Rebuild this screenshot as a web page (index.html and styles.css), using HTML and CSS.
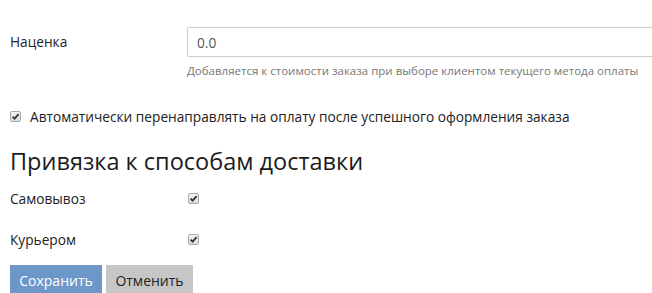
FILE: index.html
```html
<!DOCTYPE html>
<html lang="ru">
<head>
  <meta charset="UTF-8">
  <title>Способ оплаты</title>
  <link rel="stylesheet" href="styles.css">
</head>
<body>
  <form class="payment-form">
    <div class="form-row form-row-top">
      <label class="form-label" for="markup">Наценка</label>
      <div class="form-field">
        <input class="form-input" type="text" id="markup" value="0.0">
        <div class="form-help">Добавляется к стоимости заказа при выборе клиентом текущего метода оплаты</div>
      </div>
    </div>

    <div class="check-line">
      <span class="check-box">
        <svg viewBox="0 0 11 11" width="11" height="11"><path d="M2.6 5.6 L4.6 7.6 L8.6 3.2" fill="none" stroke="#333" stroke-width="1.8"/></svg>
      </span>
      <span>Автоматически перенаправлять на оплату после успешного оформления заказа</span>
    </div>

    <h2 class="section-title">Привязка к способам доставки</h2>

    <div class="form-row delivery-row">
      <span class="form-label">Самовывоз</span>
      <span class="check-box">
        <svg viewBox="0 0 11 11" width="11" height="11"><path d="M2.6 5.6 L4.6 7.6 L8.6 3.2" fill="none" stroke="#333" stroke-width="1.8"/></svg>
      </span>
    </div>
    <div class="form-row delivery-row">
      <span class="form-label">Курьером</span>
      <span class="check-box">
        <svg viewBox="0 0 11 11" width="11" height="11"><path d="M2.6 5.6 L4.6 7.6 L8.6 3.2" fill="none" stroke="#333" stroke-width="1.8"/></svg>
      </span>
    </div>

    <div class="form-actions">
      <button type="button" class="btn btn-save">Сохранить</button>
      <button type="button" class="btn btn-cancel">Отменить</button>
    </div>
  </form>
</body>
</html>
```

FILE: styles.css
```css
body {
  margin: 0;
  padding: 0;
  font-family: "Open Sans", "Noto Sans", sans-serif;
  background-color: #fff;
  color: #222;
  font-size: 13.7px;
}

.payment-form {
  padding: 27px 0 0 10px;
}

.form-row {
  display: flex;
  align-items: center;
}

.form-row-top {
  align-items: flex-start;
}

.form-label {
  width: 177px;
  flex-shrink: 0;
}

.form-row-top .form-label {
  line-height: 30px;
}

.form-field {
  flex: 1;
}

.form-input {
  box-sizing: border-box;
  width: calc(100% + 10px);
  height: 30px;
  padding: 0 9px;
  border: 1px solid #ccc;
  border-radius: 2px;
  font-family: inherit;
  font-size: 13.7px;
  color: #555;
  outline: none;
}

.form-help {
  margin-top: 6px;
  font-size: 11.5px;
  color: #777;
}

.check-line {
  display: flex;
  align-items: center;
  gap: 9px;
  margin-top: 29px;
}

.check-box {
  display: inline-flex;
  box-sizing: border-box;
  width: 11px;
  height: 11px;
  border: 1px solid #a9a9a9;
  border-radius: 2px;
  background: linear-gradient(#f4f4f4, #dcdcdc);
}

.check-box svg {
  margin: -1px;
}

.section-title {
  margin: 19px 0 1px;
  font-size: 23.5px;
  font-weight: 400;
  color: #1c1c1c;
}

.delivery-row {
  height: 41px;
}

.delivery-row .form-label {
  width: 178px;
}

.form-actions {
  display: flex;
  gap: 4px;
  margin-top: 5px;
}

.btn {
  height: 30px;
  padding: 0 9px;
  border: none;
  border-radius: 0;
  font-family: inherit;
  font-size: 14px;
  cursor: pointer;
}

.btn-save {
  width: 92px;
  background-color: #6d97c9;
  color: #fff;
}

.btn-cancel {
  width: 87px;
  background-color: #c6c6c6;
  color: #222;
}
```
